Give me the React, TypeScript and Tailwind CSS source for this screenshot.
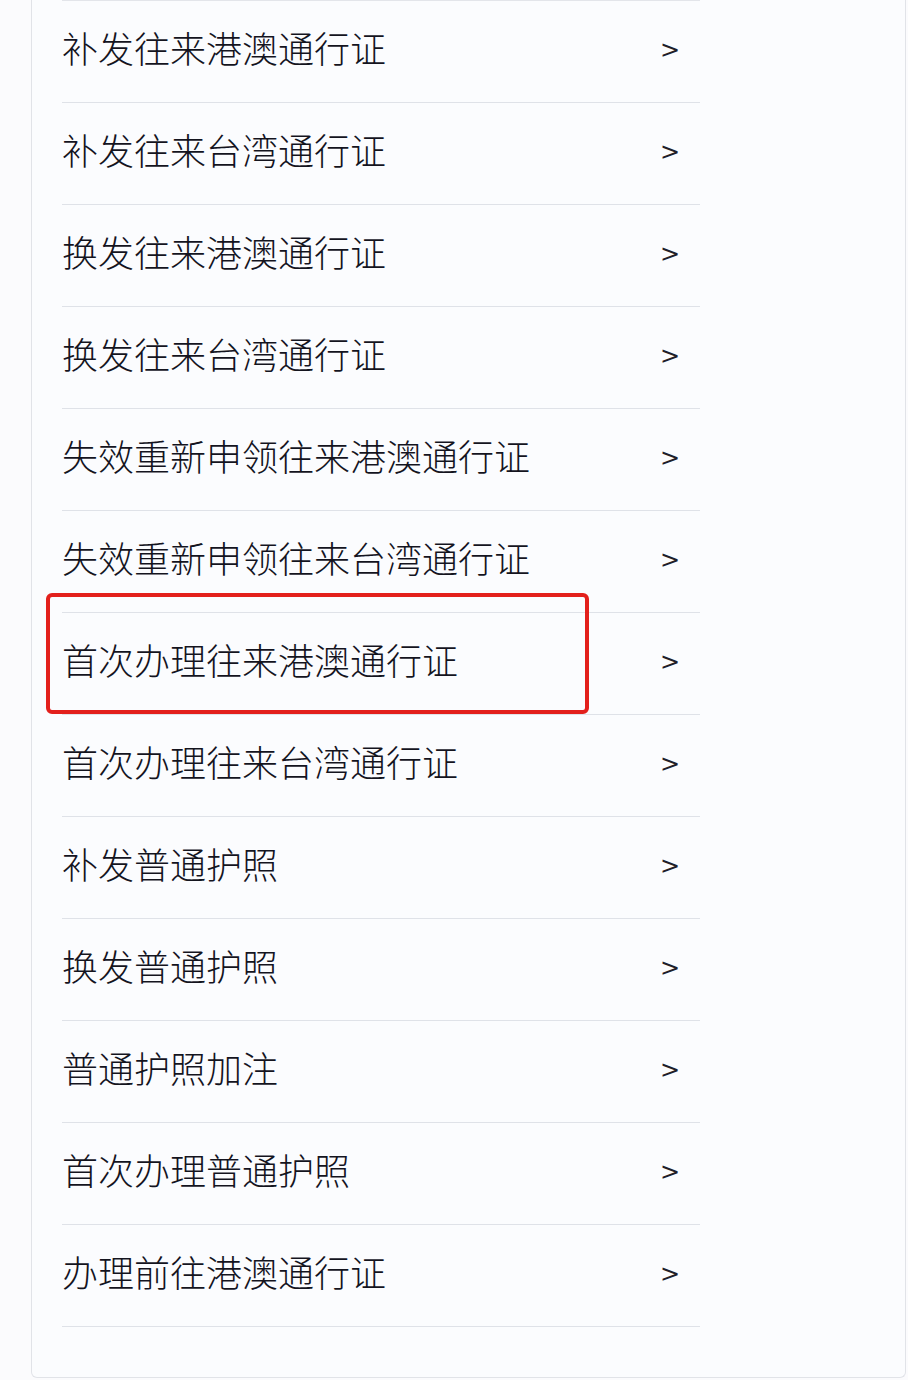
const ITEMS = [
  '补发往来港澳通行证',
  '补发往来台湾通行证',
  '换发往来港澳通行证',
  '换发往来台湾通行证',
  '失效重新申领往来港澳通行证',
  '失效重新申领往来台湾通行证',
  '首次办理往来港澳通行证',
  '首次办理往来台湾通行证',
  '补发普通护照',
  '换发普通护照',
  '普通护照加注',
  '首次办理普通护照',
  '办理前往港澳通行证',
]

const HIGHLIGHT = 6

function Row({ label, highlighted }: { label: string; highlighted: boolean }) {
  return (
    <li className="relative flex h-[102px] items-center justify-between border-b border-[#dfe2e8] pr-[20px]">
      <span className="mb-[9px] text-[36px] leading-none font-light text-[#14141e]">{label}</span>
      <span className="mb-[4px] font-['DejaVu_Sans',sans-serif] text-[24px] leading-none text-[#1e1e2a]">&gt;</span>
      {highlighted && (
        <div className="pointer-events-none absolute -top-[20px] -left-[16px] h-[121px] w-[543px] rounded-[6px] border-[4px] border-[#e3201c]" />
      )}
    </li>
  )
}

export default function App() {
  return (
    <div className="h-[1380px] w-[908px] overflow-hidden bg-[#fbfbfd] font-['Noto_Sans_CJK_SC','Noto_Sans',sans-serif]">
      <div className="ml-[31px] h-[1378px] w-[875px] rounded-b-[6px] border-r border-b border-l border-[#e1e3e8] bg-[#fbfcfe] pl-[30px]">
        <ul className="w-[638px] border-t border-[#e3e5ea]">
          {ITEMS.map((label, i) => (
            <Row key={label} label={label} highlighted={i === HIGHLIGHT} />
          ))}
        </ul>
      </div>
    </div>
  )
}
